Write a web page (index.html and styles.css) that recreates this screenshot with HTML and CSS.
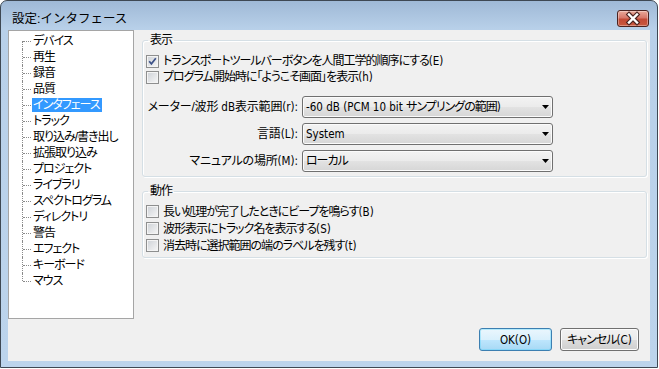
FILE: index.html
```
<!DOCTYPE html>
<html lang="ja">
<head>
    <meta charset="UTF-8">
    <meta name="viewport" content="width=device-width, initial-scale=1.0">
    <title>設定:インタフェース</title>
    <link rel="stylesheet" href="styles.css">
</head>
<body>

    <div class="window">
        <div class="titlebar">
            <span class="title">設定:インタフェース</span>
            <button class="close" type="button" aria-label="閉じる">
                <svg width="32" height="17" viewBox="0 0 32 17">
                    <path d="M12 4.5 L20 12.5 M20 4.5 L12 12.5" stroke="#4b2320" stroke-width="4.6" stroke-linecap="square"/>
                    <path d="M12 4.5 L20 12.5 M20 4.5 L12 12.5" stroke="#ffffff" stroke-width="2.4" stroke-linecap="square"/>
                </svg>
            </button>
        </div>

        <div class="client">
            <div class="main">
                <div class="tree">
                    <ul>
                        <li><span>デバイス</span></li>
                        <li><span>再生</span></li>
                        <li><span>録音</span></li>
                        <li><span>品質</span></li>
                        <li class="selected"><span>インタフェース</span></li>
                        <li><span>トラック</span></li>
                        <li><span>取り込み/書き出し</span></li>
                        <li><span>拡張取り込み</span></li>
                        <li><span>プロジェクト</span></li>
                        <li><span>ライブラリ</span></li>
                        <li><span>スペクトログラム</span></li>
                        <li><span>ディレクトリ</span></li>
                        <li><span>警告</span></li>
                        <li><span>エフェクト</span></li>
                        <li><span>キーボード</span></li>
                        <li><span>マウス</span></li>
                    </ul>
                </div>

                <div class="panel">
                    <fieldset class="group">
                        <legend>表示</legend>
                        <label class="check">
                            <span class="box"><svg width="11" height="11" viewBox="0 0 11 11"><path d="M2.2 5.2 L4.4 7.8 L8.8 2.2" fill="none" stroke="#3d5288" stroke-width="1.7"/></svg></span>
                            <span>トランスポートツールバーボタンを人間工学的順序にする<span class="en">(E)</span></span>
                        </label>
                        <label class="check">
                            <span class="box"></span>
                            <span>プログラム開始時に「ようこそ画面」を表示<span class="en">(h)</span></span>
                        </label>

                        <div class="choices">
                            <span class="choice-label">メーター/波形 <span class="en">dB</span>表示範囲<span class="en">(r):</span></span>
                            <div class="combo"><span><span class="en">-60 dB (PCM 10 bit </span>サンプリングの範囲<span class="en">)</span></span><svg width="7" height="4" viewBox="0 0 7 4"><polygon points="0,0 7,0 3.5,4" fill="#000"/></svg></div>

                            <span class="choice-label">言語<span class="en">(L):</span></span>
                            <div class="combo"><span class="en">System</span><svg width="7" height="4" viewBox="0 0 7 4"><polygon points="0,0 7,0 3.5,4" fill="#000"/></svg></div>

                            <span class="choice-label">マニュアルの場所<span class="en">(M):</span></span>
                            <div class="combo"><span>ローカル</span><svg width="7" height="4" viewBox="0 0 7 4"><polygon points="0,0 7,0 3.5,4" fill="#000"/></svg></div>
                        </div>
                    </fieldset>

                    <fieldset class="group actions">
                        <legend>動作</legend>
                        <label class="check"><span class="box"></span><span>長い処理が完了したときにビープを鳴らす<span class="en">(B)</span></span></label>
                        <label class="check"><span class="box"></span><span>波形表示にトラック名を表示する<span class="en">(S)</span></span></label>
                        <label class="check"><span class="box"></span><span>消去時に選択範囲の端のラベルを残す<span class="en">(t)</span></span></label>
                    </fieldset>
                </div>
            </div>

            <div class="buttons">
                <button class="btn default" type="button"><span class="en">OK(O)</span></button>
                <button class="btn cancel" type="button">キャンセル<span class="en">(C)</span></button>
            </div>
        </div>
    </div>

</body>
</html>
```

FILE: styles.css
```
* {
    box-sizing: border-box;
}
body {
    margin: 0;
    background: #ffffff;
    font-family: "Liberation Sans", "Noto Sans CJK JP", sans-serif;
    font-size: 12px;
    line-height: 16px;
    letter-spacing: -1px;
    color: #000;
    font-feature-settings: "palt";
}
.en {
    font-family: "DejaVu Sans", "Noto Sans CJK JP", sans-serif;
    font-size: 11.5px;
    font-stretch: semi-condensed;
    letter-spacing: 0;
}
.window {
    width: 658px;
    height: 368px;
    border: 1px solid #3e4853;
    border-radius: 7px 7px 0 0;
    background: linear-gradient(#9fb9d6 0, #b8d0e9 28px, #bcd4ec 100%);
    box-shadow: 0 1px 0 #33b0cf;
    padding: 0 7px 6px 7px;
    display: flex;
    flex-direction: column;
}
.titlebar {
    height: 29px;
    display: flex;
    align-items: flex-start;
    justify-content: space-between;
    padding-left: 4px;
}
.title {
    margin-top: 10px;
    font-size: 12.5px;
    line-height: 16px;
    letter-spacing: 0;
    font-feature-settings: normal;
}
.close {
    width: 32px;
    height: 17px;
    margin-top: 9px;
    margin-right: 1px;
    padding: 0;
    border: 1px solid #4b2320;
    border-radius: 3px;
    background: linear-gradient(#e9a99a 0%, #d7786a 45%, #c24a36 55%, #c9583e 100%);
    box-shadow: inset 0 0 0 1px rgba(255, 255, 255, 0.35);
    display: flex;
    align-items: center;
    justify-content: center;
}
.close svg {
    display: block;
    margin: -1px;
}
.client {
    flex: 1;
    background: #f0f0f0;
    display: flex;
    flex-direction: column;
}
.main {
    height: 289px;
    display: flex;
}
.tree {
    width: 126px;
    border: 1px solid #a5a5a5;
    background: #fff;
}
.tree ul {
    list-style: none;
    margin: 0;
    padding: 2px 0 0 23px;
}
.tree li {
    position: relative;
    height: 16px;
    line-height: 16px;
    white-space: nowrap;
}
.tree li span {
    padding: 0 2px 0 1px;
}
.tree li::before {
    content: "";
    position: absolute;
    left: -10px;
    top: 0;
    bottom: 0;
    border-left: 1px dotted #8a8a8a;
}
.tree li:first-child::before {
    top: 8px;
}
.tree li:last-child::before {
    bottom: 8px;
}
.tree li::after {
    content: "";
    position: absolute;
    left: -9px;
    top: 8px;
    width: 8px;
    border-top: 1px dotted #8a8a8a;
}
.tree li.selected span {
    background: #3399ff;
    color: #fff;
}
.panel {
    flex: 1;
    padding: 3px 3px 0 8px;
}
.group {
    margin: 0;
    padding: 6px 3px 4px 3px;
    border: 1px solid #d5dfe5;
    border-radius: 3px;
    box-shadow: inset 1px 1px 0 #fff, 1px 1px 0 #fff;
}
.group legend {
    padding: 0 2px;
    margin-left: 2px;
    line-height: 14px;
}
.group.actions {
    margin-top: 7px;
    padding-top: 5px;
    padding-bottom: 3px;
}
.check {
    display: flex;
    align-items: center;
    gap: 4px;
    height: 16px;
    white-space: nowrap;
}
.actions .check {
    height: 17px;
}
.box {
    width: 13px;
    height: 13px;
    flex: none;
    border: 1px solid #8e8f8f;
    background: linear-gradient(135deg, #cdd1d6, #f7f7f7);
    box-shadow: inset 0 0 0 1px #f4f4f4;
    display: flex;
    align-items: center;
    justify-content: center;
}
.box svg {
    display: block;
}
.choices {
    display: grid;
    grid-template-columns: 156px 251px;
    row-gap: 5px;
    margin-top: 11px;
    align-items: center;
}
.choice-label {
    text-align: right;
    padding-right: 4px;
    white-space: nowrap;
    letter-spacing: -0.2px;
}
.combo {
    height: 22px;
    border: 1px solid #707070;
    border-radius: 3px;
    background: linear-gradient(#f3f3f3 0%, #ebebeb 50%, #e2e2e2 52%, #d6d6d6 100%);
    box-shadow: inset 0 0 0 1px #fbfbfb;
    display: flex;
    align-items: center;
    justify-content: space-between;
    padding: 0 3px 0 3px;
    white-space: nowrap;
}
.buttons {
    display: flex;
    justify-content: flex-end;
    gap: 8px;
    margin-top: 9px;
    padding-right: 11px;
}
.btn {
    height: 23px;
    padding: 0;
    font: inherit;
    letter-spacing: inherit;
    color: #000;
    border: 1px solid #707070;
    border-radius: 3px;
    background: linear-gradient(#f2f2f2 0%, #ebebeb 50%, #dddddd 51%, #cfcfcf 100%);
    box-shadow: inset 0 0 0 1px #fcfcfc;
}
.btn.default {
    width: 73px;
    border-color: #3c7fb1;
    background: linear-gradient(#eaf6fd 0%, #d9f0fc 50%, #bee6fd 51%, #a7d9f5 100%);
    box-shadow: inset 0 0 0 1px #48d2fc55;
}
.btn.cancel {
    width: 79px;
}
```
